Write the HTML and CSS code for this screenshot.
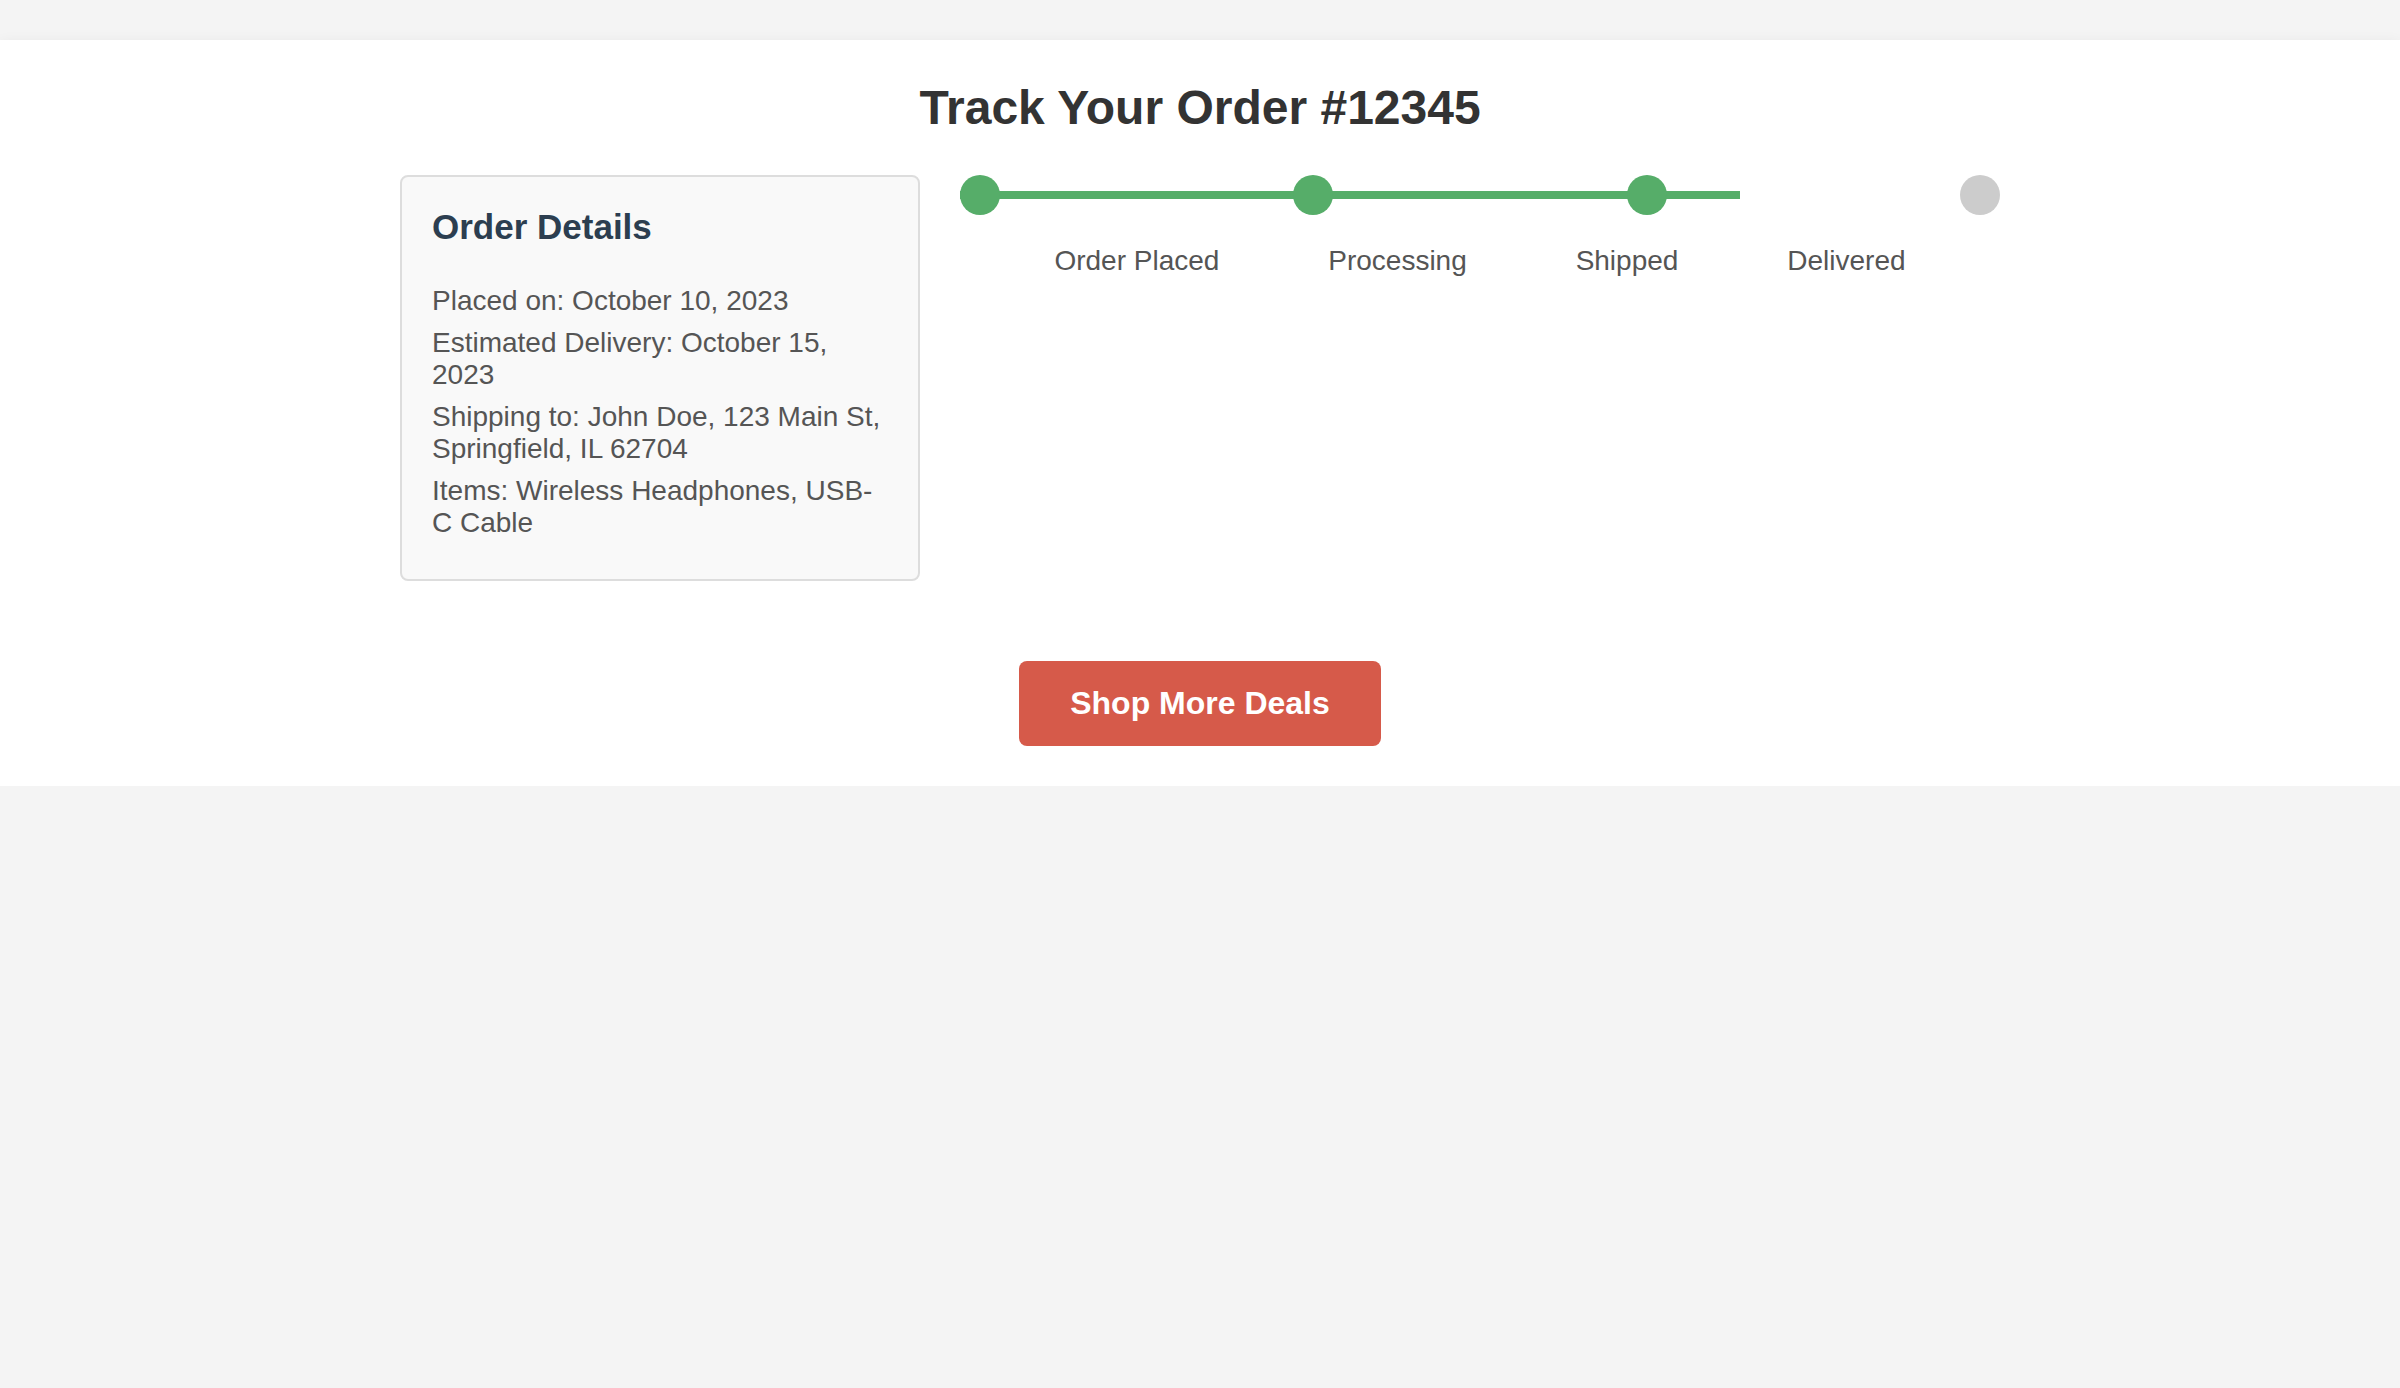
FILE: index.html
```html
<!DOCTYPE html>
<html lang="en">
<head>
<meta charset="utf-8">
<title>Track Your Order</title>
<link rel="stylesheet" href="styles.css">
</head>
<body>
<div class="page">
  <h1 class="title">Track Your Order #12345</h1>
  <div class="content">
    <div class="card">
      <h2 class="card-title">Order Details</h2>
      <p class="detail">Placed on: October 10, 2023</p>
      <p class="detail">Estimated Delivery: October 15, 2023</p>
      <p class="detail">Shipping to: John Doe, 123 Main St, Springfield, IL 62704</p>
      <p class="detail">Items: Wireless Headphones, USB-C Cable</p>
    </div>
    <div class="tracker">
      <div class="steps">
        <div class="progress" style="width: 75%"></div>
        <span class="dot done"></span>
        <span class="dot done"></span>
        <span class="dot done"></span>
        <span class="dot"></span>
      </div>
      <div class="labels">
        <span class="label">Order Placed</span>
        <span class="label">Processing</span>
        <span class="label">Shipped</span>
        <span class="label">Delivered</span>
      </div>
    </div>
  </div>
  <div class="actions">
    <a class="btn" href="#">Shop More Deals</a>
  </div>
</div>
</body>
</html>
```
FILE: styles.css
```css
html, body {
  margin: 0;
  padding: 0;
}
body {
  background: #f4f4f4;
  font-family: "Liberation Sans", Arial, Helvetica, sans-serif;
  color: #555;
  padding-top: 40px;
}
.page {
  background: #fff;
  box-shadow: 0 4px 14px rgba(0, 0, 0, 0.08);
  padding: 40px 0 40px;
}
.title {
  margin: 0 0 40px;
  text-align: center;
  font-size: 48px;
  font-weight: bold;
  color: #333;
}
.content {
  width: 1600px;
  margin: 0 auto;
  display: grid;
  grid-template-columns: 1fr 2fr;
  gap: 40px;
  align-items: start;
}
.card {
  min-width: 0;
  background: #f9f9f9;
  border: 2px solid #ddd;
  border-radius: 8px;
  padding: 30px;
}
.card-title {
  margin: 0 0 37.5px;
  font-size: 35px;
  font-weight: bold;
  color: #2c3e50;
}
.detail {
  margin: 10px 0;
  font-size: 28px;
  color: #555;
}
.card-title + .detail {
  margin-top: 0;
}
.tracker {
  min-width: 0;
}
.steps {
  position: relative;
  display: flex;
  justify-content: space-between;
  align-items: center;
}
.progress {
  position: absolute;
  left: 0;
  top: 16px;
  height: 8px;
  background: #56ad69;
}
.dot {
  position: relative;
  width: 40px;
  height: 40px;
  border-radius: 50%;
  background: #ccc;
}
.dot.done {
  background: #56ad69;
}
.labels {
  margin-top: 29.5px;
  padding: 0 40px;
  display: flex;
  justify-content: space-around;
}
.label {
  font-size: 28px;
  color: #555;
}
.actions {
  margin-top: 80px;
  text-align: center;
}
.btn {
  display: inline-block;
  background: #d65a4a;
  color: #fff;
  font-size: 32px;
  font-weight: bold;
  text-decoration: none;
  padding: 24.5px 51px 24px;
  border-radius: 8px;
}
```
